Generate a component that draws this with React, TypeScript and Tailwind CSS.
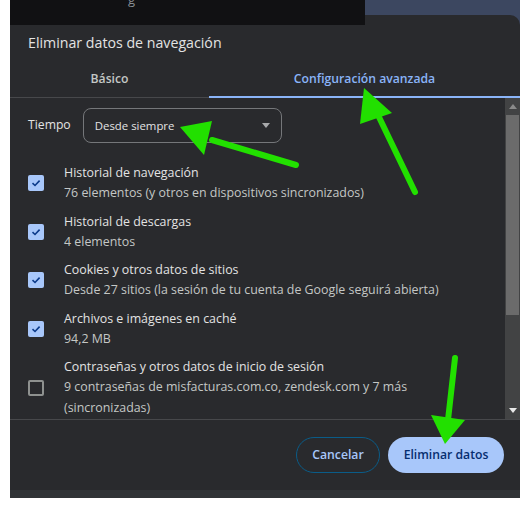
import React from 'react';

const font = { fontFamily: '"Open Sans", "Noto Sans", sans-serif' };

type Item = { title: string; lines: string[]; checked: boolean };

const items: Item[] = [
  { title: 'Historial de navegación', lines: ['76 elementos (y otros en dispositivos sincronizados)'], checked: true },
  { title: 'Historial de descargas', lines: ['4 elementos'], checked: true },
  { title: 'Cookies y otros datos de sitios', lines: ['Desde 27 sitios (la sesión de tu cuenta de Google seguirá abierta)'], checked: true },
  { title: 'Archivos e imágenes en caché', lines: ['94,2 MB'], checked: true },
  {
    title: 'Contraseñas y otros datos de inicio de sesión',
    lines: ['9 contraseñas de misfacturas.com.co, zendesk.com y 7 más', '(sincronizadas)'],
    checked: false,
  },
];

function Checkbox({ checked }: { checked: boolean }) {
  if (!checked) {
    return <div className="w-[16px] h-[16px] shrink-0 rounded-[2px] border-2 border-[#8e918f]" />;
  }
  return (
    <div className="w-[16px] h-[16px] shrink-0 rounded-[2px] bg-[#a8c7fa] flex items-center justify-center">
      <svg width="12" height="12" viewBox="0 0 12 12">
        <path d="M2.5 6.2 L5 8.5 L9.6 3.6" fill="none" stroke="#0b3a8a" strokeWidth="1.6" />
      </svg>
    </div>
  );
}

function Row({ item }: { item: Item }) {
  return (
    <div className="flex items-center gap-[20px] py-[4px]">
      <Checkbox checked={item.checked} />
      <div className="flex flex-col">
        <div className="text-[12.4px] leading-[20px] text-[#e3e3e3]">{item.title}</div>
        {item.lines.map((l) => (
          <div key={l} className="text-[12.4px] leading-[20.5px] text-[#c4c7c5]">{l}</div>
        ))}
      </div>
    </div>
  );
}

function Arrows() {
  const g = '#22e000';
  return (
    <svg className="absolute left-0 top-0 pointer-events-none" width="531" height="508">
      <line x1="296" y1="165" x2="212" y2="140" stroke={g} strokeWidth="6" strokeLinecap="round" />
      <polygon points="180,127 212,121 204,155" fill={g} />
      <line x1="415" y1="192" x2="378" y2="115" stroke={g} strokeWidth="6" strokeLinecap="round" />
      <polygon points="364,88 392,113 360,124" fill={g} />
      <line x1="455" y1="358" x2="448" y2="420" stroke={g} strokeWidth="6" strokeLinecap="round" />
      <polygon points="431,415 465,420 445,444" fill={g} />
    </svg>
  );
}

export default function App() {
  return (
    <div className="relative w-[531px] h-[508px] bg-white overflow-hidden" style={font}>
      <div className="ml-[10px] w-[510px] flex flex-col">
        <div className="flex h-[25px]">
          <div className="w-[355px] bg-[#111113] relative overflow-hidden">
            <span className="absolute left-[118px] -top-[9px] text-[13px] leading-[16px] text-[#8a8f95]">g</span>
          </div>
          <div className="flex-1 bg-[#3c4760]" />
        </div>
        <div className="-mt-[10px] h-[475px] rounded-t-[10px] bg-[#292a2d] flex flex-col">
          <div className="pl-[18px] pt-[18px] h-[45px] text-[14.2px] leading-[20px] text-[#e3e3e3]">
            Eliminar datos de navegación
          </div>
          <div className="flex h-[38px] border-b border-[#47484b]">
            <div className="w-[199px] flex items-center justify-center pt-[2px] text-[12.2px] font-semibold text-[#c4c7c5]">
              Básico
            </div>
            <div className="flex-1 flex items-center justify-center pt-[2px] text-[12.2px] font-semibold text-[#8ab4f8] border-b-2 border-[#8ab4f8] -mb-px">
              Configuración avanzada
            </div>
          </div>
          <div className="flex h-[322px] border-b border-[#47484b]">
            <div className="flex-1 pl-[18px] pt-[10px] overflow-hidden">
              <div className="flex items-center gap-[12px]">
                <span className="text-[12.2px] text-[#e3e3e3]">Tiempo</span>
                <div className="w-[199px] h-[35px] rounded-[8px] border border-[#75777a] flex items-center justify-between pl-[11px] pr-[10px]">
                  <span className="text-[11.4px] text-[#e3e3e3]">Desde siempre</span>
                  <svg width="10" height="6" viewBox="0 0 10 6">
                    <polygon points="1,0 9,0 5,5" fill="#a8a9ab" />
                  </svg>
                </div>
              </div>
              <div className="mt-[16px] flex flex-col">
                {items.map((it) => (
                  <Row key={it.title} item={it} />
                ))}
              </div>
            </div>
            <div className="w-[15px] bg-[#424344] flex flex-col items-center">
              <div className="h-[17px] flex items-center justify-center">
                <svg width="8" height="5" viewBox="0 0 8 5">
                  <polygon points="0,5 8,5 4,0" fill="#8a8a8a" />
                </svg>
              </div>
              <div className="w-[13px] h-[200px] bg-[#6b6b6b]" />
              <div className="flex-1" />
              <div className="h-[17px] flex items-center justify-center">
                <svg width="8" height="5" viewBox="0 0 8 5">
                  <polygon points="0,0 8,0 4,5" fill="#e8e8e8" />
                </svg>
              </div>
            </div>
          </div>
          <div className="flex justify-end gap-[8px] pt-[17px] pr-[16px]">
            <button className="w-[84px] h-[36px] rounded-full border border-[#0a5c88] text-[12.2px] font-semibold text-[#a8c7fa]">
              Cancelar
            </button>
            <button className="w-[116px] h-[36px] rounded-full bg-[#a8c7fa] text-[12.2px] font-semibold text-[#062e6f]">
              Eliminar datos
            </button>
          </div>
        </div>
        <div className="h-[8px] bg-[#303336]" />
      </div>
      <Arrows />
    </div>
  );
}
